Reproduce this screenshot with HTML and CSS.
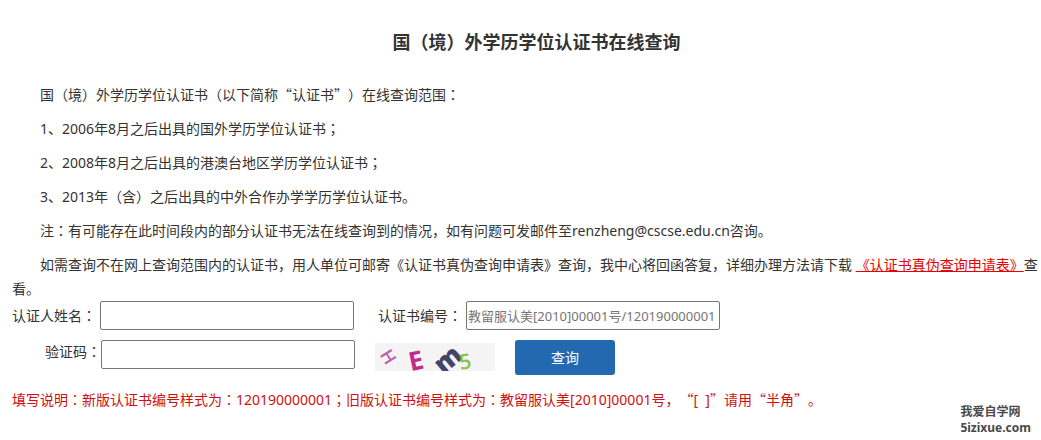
FILE: index.html
```html
<!DOCTYPE html>
<html lang="zh-CN">
<head>
<meta charset="utf-8">
<title>国（境）外学历学位认证书在线查询</title>
<link rel="stylesheet" href="styles.css">
</head>
<body>
<main class="page">
  <h1 class="title">国（境）外学历学位认证书在线查询</h1>
  <div class="intro">
    <p>国（境）外学历学位认证书（以下简称<span class="wide">“</span>认证书<span class="wide">”</span>）在线查询范围<span class="mid">：</span></p>
    <p>1、2006年8月之后出具的国外学历学位认证书<span class="mid">；</span></p>
    <p>2、2008年8月之后出具的港澳台地区学历学位认证书<span class="mid">；</span></p>
    <p>3、2013年（含）之后出具的中外合作办学学历学位认证书。</p>
    <p>注<span class="mid">：</span>有可能存在此时间段内的部分认证书无法在线查询到的情况，如有问题可发邮件至renzheng@cscse.edu.cn咨询。</p>
    <p>如需查询不在网上查询范围内的认证书，用人单位可邮寄《认证书真伪查询申请表》查询，我中心将回函答复，详细办理方法请下载 <a class="download" href="#">《认证书真伪查询申请表》</a>查看。</p>
  </div>
  <form class="query">
    <div class="row">
      <div class="field">
        <label class="name-label" for="holder">认证人姓名<span class="mid">：</span></label>
        <input class="box" id="holder" type="text">
      </div>
      <div class="field">
        <label class="number-label" for="number">认证书编号<span class="mid">：</span></label>
        <input class="box" id="number" type="text" placeholder="教留服认美[2010]00001号/120190000001">
      </div>
    </div>
    <div class="row code-row">
      <div class="field">
        <label class="code-label" for="code">验证码<span class="mid">：</span></label>
        <input class="box" id="code" type="text">
      </div>
      <svg class="captcha" viewBox="0 0 120 28" role="img" aria-label="验证码图片">
        <rect width="120" height="28" fill="#f4f4f4"/>
        <text class="c1" transform="translate(13 14) rotate(58)" y="6">H</text>
        <text class="c2" transform="translate(41 18) rotate(-12)" y="9">E</text>
        <text class="c3" transform="translate(74 18) rotate(-40)" y="7">m</text>
        <text class="c4" transform="translate(90 18) rotate(-8)" y="8">5</text>
      </svg>
      <button class="submit" type="submit">查询</button>
    </div>
  </form>
  <p class="hint">填写说明<span class="mid">：</span>新版认证书编号样式为<span class="mid">：</span>120190000001<span class="mid">；</span>旧版认证书编号样式为<span class="mid">：</span>教留服认美[2010]00001号，<span class="wide">“</span>[&nbsp; ]<span class="wide">”</span>请用<span class="wide">“</span>半角<span class="wide">”</span>。</p>
  <div class="watermark">我爱自学网<br>5izixue.com</div>
</main>
</body>
</html>
```

FILE: styles.css
```css
* {
  box-sizing: border-box;
}

body {
  margin: 0;
  background: #fff;
  color: #333;
  font: 14px/24px "Noto Sans", "Noto Sans CJK SC", sans-serif;
  text-spacing-trim: space-all;
}

.page {
  padding: 30px 0 0 12px;
}

.title {
  margin: 0 0 29px;
  padding-left: 20px;
  font-size: 18px;
  line-height: 24px;
  text-align: center;
}

.intro p {
  margin: 0 0 10px;
  text-indent: 28px;
}

.intro p:last-child {
  margin-bottom: 0;
}

.wide {
  font-family: "Noto Sans CJK SC", sans-serif;
  line-height: 1;
}

/* full-width colon and semicolon centred in their cell */
.mid {
  font-family: "Noto Sans CJK JP", sans-serif;
  font-feature-settings: "locl" 0;
  line-height: 1;
}

.download {
  color: #e60000;
}

.row {
  display: flex;
  align-items: center;
  gap: 24px;
}

.field {
  display: flex;
  align-items: center;
}

.name-label,
.number-label {
  padding-right: 4px;
}

.code-label {
  padding-left: 33px;
}

.box {
  width: 254px;
  height: 29px;
  padding: 1px;
  border: 1px solid #767676;
  border-radius: 2px;
  background: #fff;
  color: #333;
  font-family: inherit;
  font-size: 13px;
}

.box::placeholder {
  color: #757575;
}

.code-row {
  gap: 20px;
  margin-top: 10px;
}

.code-row,
.code-row .field {
  align-items: flex-start;
}

.captcha {
  width: 120px;
  height: 28px;
  margin-top: 3px;
  font-family: "Open Sans", sans-serif;
  text-anchor: middle;
}

.c1 {
  fill: #bd62ad;
  font-size: 18px;
  font-weight: 600;
}

.c2 {
  fill: #c32a8c;
  font-size: 26px;
  font-weight: 700;
}

.c3 {
  fill: #444468;
  font-size: 27px;
  font-weight: 800;
}

.c4 {
  fill: #8bc34a;
  font-size: 21px;
  font-weight: 600;
}

.submit {
  width: 100px;
  height: 35px;
  padding: 0;
  border: 0;
  border-radius: 3px;
  background: #2269b0;
  color: #fff;
  font: inherit;
}

.hint {
  margin: 13px 0 0;
  color: #d01010;
}

.watermark {
  width: max-content;
  margin: -8px 10px 0 auto;
  color: #484848;
  font-size: 12px;
  font-weight: 700;
  line-height: 16px;
}
```
